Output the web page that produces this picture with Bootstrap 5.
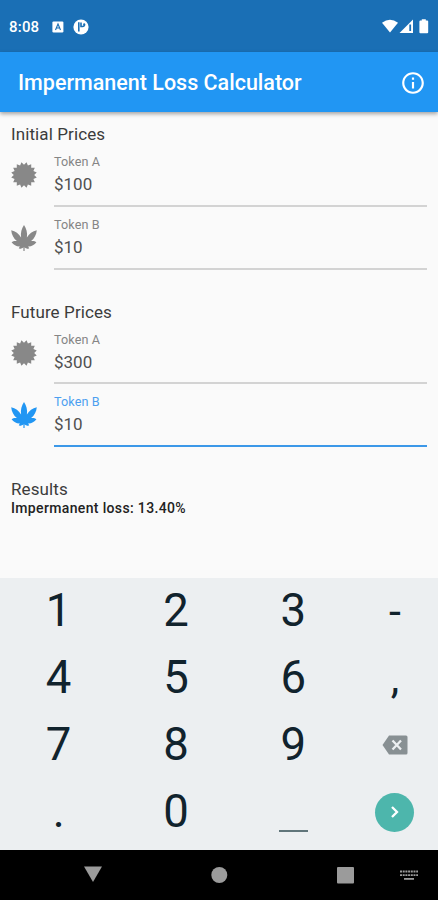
<!DOCTYPE html>
<html lang="en">
<head>
<meta charset="utf-8">
<meta name="viewport" content="width=device-width, initial-scale=1">
<title>Impermanent Loss Calculator</title>
<link href="https://cdn.jsdelivr.net/npm/bootstrap@5.3.0/dist/css/bootstrap.min.css" rel="stylesheet">
<style>
body{font-family:Roboto,sans-serif;background:#fafafa;color:#3c3c3c;height:900px;overflow:hidden}
svg{display:block;flex:none}
.status-bar{height:52px;background:#1a6fb5;padding:2px 8px 0 9px}
.clock{font-size:15px;font-weight:500;letter-spacing:.2px;width:43px;line-height:20px}
.app-bar{height:60px;background:#2196f3;padding:2px 12px 0 18px;box-shadow:0 2px 4px rgba(0,0,0,.35);z-index:1}
.app-title{font-size:21.5px;font-weight:500;letter-spacing:0;line-height:28px}
.content{padding:12px 11px 0}
.price-group{height:177.7px}
.section-title{font-size:17px;font-weight:400;line-height:20px;letter-spacing:.1px}
.field{height:62.8px}
.field-icon{width:43px;padding-top:18px;color:#888}
.field-body{border-bottom:2px solid #d3d3d3;padding-top:10px;height:62.8px}
.field-label{font-size:12.6px;line-height:16px;color:#858585;letter-spacing:.1px}
.field-value{font-size:17px;line-height:20px;margin-top:4px;color:#505050}
.field.active .field-icon{color:#2196f3}
.field.active .field-label{color:#4c9ff0}
.field.active .field-body{border-color:#3c98e8}
.result{font-size:14px;font-weight:500;line-height:18px;letter-spacing:.35px;color:#222}
.keypad{height:272px;background:#eceff1;display:grid;grid-template-columns:117.3px 117.3px 117.3px 1fr;grid-template-rows:repeat(4,66.9px);color:#11232d;font-size:45.5px}
.keypad>div{line-height:66.9px}
.key-small{font-size:43px}
.enter{width:39px;height:39px;background:#4db6ac}
.blank-key{width:29px;height:2px;background:#60757a;margin-top:38px}
.nav-keys{height:50px;background:#000}
.nav-keys svg{width:438px;height:50px}
</style>
</head>
<body class="d-flex flex-column m-0">
<svg width="0" height="0" class="position-absolute" aria-hidden="true">
<defs>
<symbol id="burst" viewBox="0 0 26 26"><path id="burst-path" fill="currentColor"/></symbol>
<symbol id="leaf" viewBox="0 0 26 26"><path fill="currentColor" d="M13 0C15.3 3.4 16.7 8 15.9 12.4C18 8.9 21.6 6.1 25.8 5.3C25.4 9.7 23.4 13.5 20.1 16.1C22 15.7 24 16.1 25.4 17.2C23.4 20 20.4 21.6 17 21.4C17.7 21.9 18.1 22.6 18.2 23.6C16.4 24 14.8 23.4 13.6 22.2V26H12.4V22.2C11.2 23.4 9.6 24 7.8 23.6C7.9 22.6 8.3 21.9 9 21.4C5.6 21.6 2.6 20 .6 17.2C2 16.1 4 15.7 5.9 16.1C2.6 13.5.6 9.7.2 5.3C4.4 6.1 8 8.9 10.1 12.4C9.3 8 10.7 3.4 13 0Z"/></symbol>
</defs>
</svg>

<header class="status-bar d-flex align-items-center text-white">
<span class="clock">8:08</span>
<svg width="12" height="12" viewBox="0 0 12 12"><rect x=".4" y=".4" width="11" height="11" rx="1.2" fill="#fff"/><path d="M3.5 9 6 3l2.5 6M4.4 7h3.2" fill="none" stroke="#1a6fb5" stroke-width="1.1"/></svg>
<svg class="ms-2" width="18" height="16" viewBox="0 0 18 16"><circle cx="9" cy="8" r="7.6" fill="#fff"/><path d="M6.8 3.2v9.2M9 3.5v4h1.5a2 2 0 0 0 2-2" fill="none" stroke="#1a6fb5" stroke-width="1.6"/><circle cx="12.2" cy="5.4" r="1.1" fill="#1a6fb5"/></svg>
<svg class="ms-auto" width="48" height="16" viewBox="0 0 48 16" fill="#fff"><path d="M0 3.8Q8-2.2 16 3.8L8 13.6Z"/><path d="M17.5 14 31 .5V14Z"/><path d="M27.3 5.5h1.8V12h-1.8z" fill="#1a6fb5"/><path d="M39.8 1.5V.2h4v1.3h1.4q1 0 1 1v10.8q0 1-1 1h-6.8q-1 0-1-1V2.5q0-1 1-1Z"/></svg>
</header>
<div class="app-bar d-flex align-items-center justify-content-between text-white">
<h1 class="app-title m-0">Impermanent Loss Calculator</h1>
<svg width="26" height="26" viewBox="0 0 24 24" fill="#fff"><path d="M11 7h2v2h-2zm0 4h2v6h-2zm1-9C6.48 2 2 6.48 2 12s4.480 10 10 10 10-4.480 10-10S17.520 2 12 2zm0 18c-4.410 0-8-3.590-8-8s3.590-8 8-8 8 3.590 8 8-3.590 8-8 8z"/></svg>
</div>
<main class="content flex-grow-1">
<section class="price-group">
<h2 class="section-title m-0">Initial Prices</h2>
<div class="field d-flex"><div class="field-icon"><svg width="26" height="26"><use href="#burst"/></svg></div><div class="field-body flex-grow-1"><div class="field-label">Token A</div><div class="field-value">$100</div></div></div>
<div class="field d-flex"><div class="field-icon"><svg width="26" height="26"><use href="#leaf"/></svg></div><div class="field-body flex-grow-1"><div class="field-label">Token B</div><div class="field-value">$10</div></div></div>
</section>
<section class="price-group">
<h2 class="section-title m-0">Future Prices</h2>
<div class="field d-flex"><div class="field-icon"><svg width="26" height="26"><use href="#burst"/></svg></div><div class="field-body flex-grow-1"><div class="field-label">Token A</div><div class="field-value">$300</div></div></div>
<div class="field active d-flex"><div class="field-icon"><svg width="26" height="26"><use href="#leaf"/></svg></div><div class="field-body flex-grow-1"><div class="field-label">Token B</div><div class="field-value">$10</div></div></div>
</section>
<section>
<h2 class="section-title m-0">Results</h2>
<div class="result">Impermanent loss: 13.40%</div>
</section>
</main>
<div class="keypad text-center">
<div>1</div><div>2</div><div>3</div><div class="key-small">-</div>
<div>4</div><div>5</div><div>6</div><div class="key-small">,</div>
<div>7</div><div>8</div><div>9</div>
<div class="d-flex align-items-center justify-content-center"><svg width="26" height="20" viewBox="0 0 26 20"><path d="M7 .5h17q1.500 0 1.500 1.500v16q0 1.500-1.500 1.500H7L.5 10Z" fill="#889093"/><path d="m10.500 5.500 8.500 9m0-9-8.500 9" stroke="#eceff1" stroke-width="2.300"/></svg></div>
<div>.</div><div>0</div>
<div class="d-flex align-items-center justify-content-center"><span class="blank-key"></span></div>
<div class="d-flex align-items-center justify-content-center"><span class="enter rounded-circle d-flex align-items-center justify-content-center"><svg width="12" height="16" viewBox="0 0 12 16"><path d="m3 3 5 5-5 5" fill="none" stroke="#fff" stroke-width="2.300"/></svg></span></div>
</div>
<footer class="nav-keys">
<svg viewBox="0 0 438 50" fill="#9b9b9b"><path d="M84 16.500h18L93 32Z"/><circle cx="219.300" cy="25" r="8"/><rect x="337" y="17" width="17" height="16.500" rx="1"/><path d="M400 21.500h18M400 25.200h18" stroke="#9b9b9b" stroke-width="1.800" stroke-dasharray="2 .7"/><path d="M404 28h10v1.800h-10z"/></svg>
</footer>
<script>
// Sixteen-point burst centred in its 26-unit box
const points = Array.from({length: 32}, (_, i) => {
  const r = i % 2 ? 10.2 : 13, a = (i + 1) * Math.PI / 16;
  return (13 + r * Math.sin(a)).toFixed(2) + ' ' + (13 - r * Math.cos(a)).toFixed(2);
});
document.getElementById('burst-path').setAttribute('d', 'M' + points.join('L') + 'Z');
</script>
<script src="https://cdn.jsdelivr.net/npm/bootstrap@5.3.0/dist/js/bootstrap.bundle.min.js"></script>
</body>
</html>
